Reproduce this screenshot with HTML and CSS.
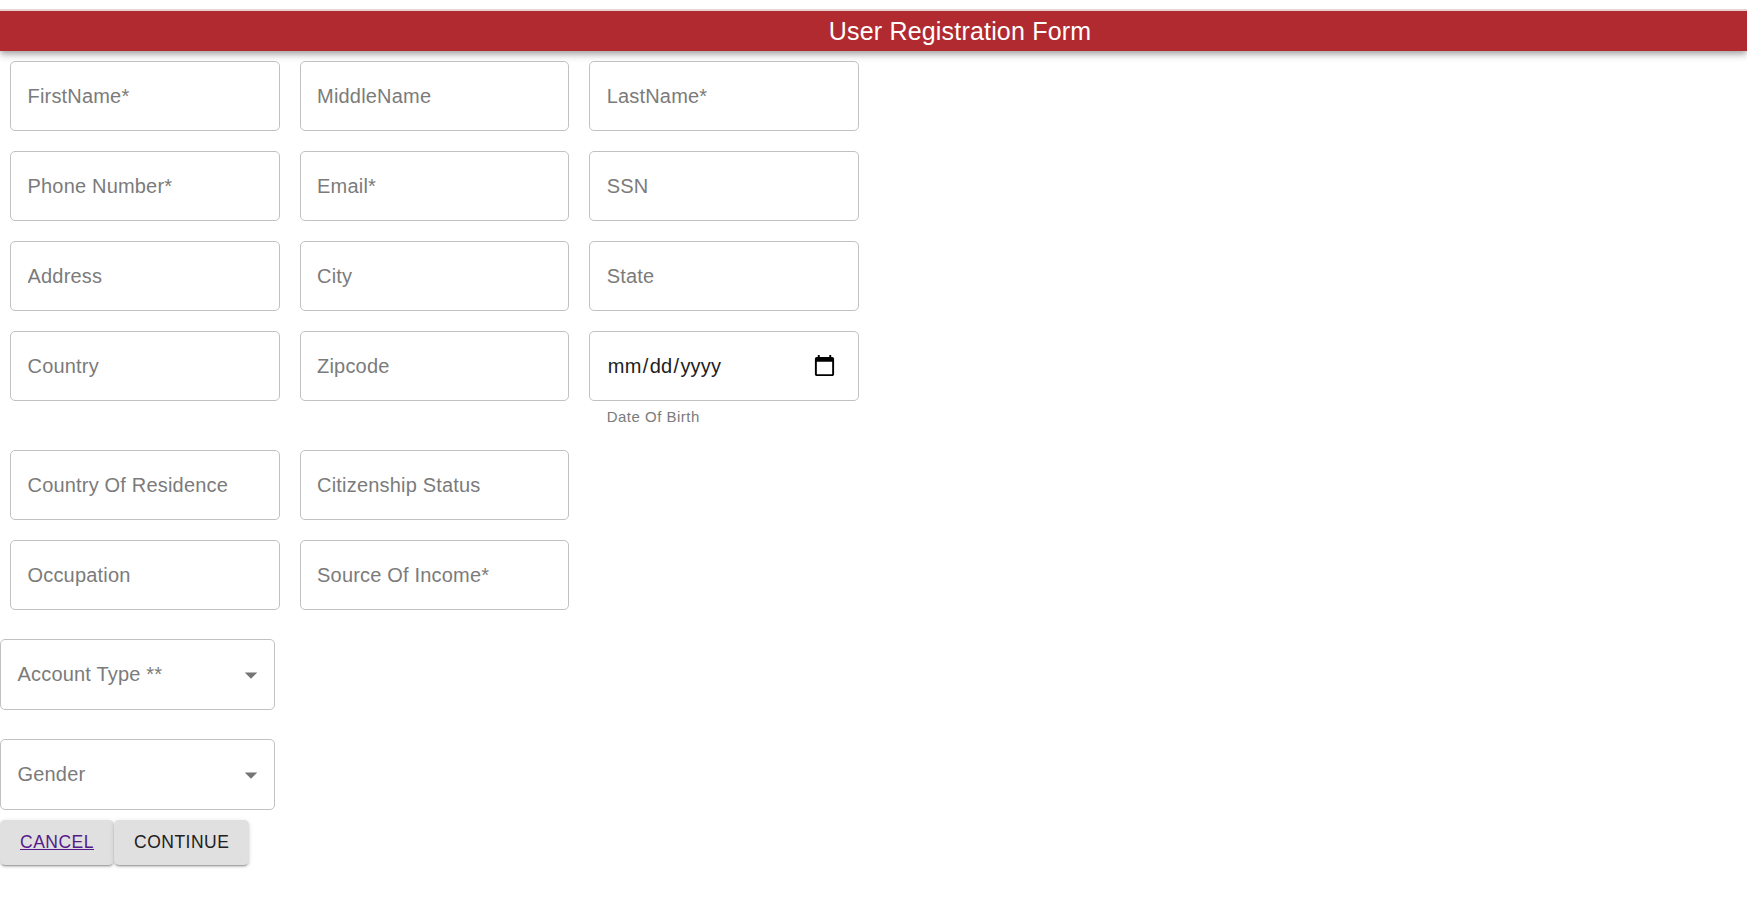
FILE: index.html
```html
<!DOCTYPE html>
<html lang="en">
<head>
<meta charset="utf-8">
<title>User Registration Form</title>
<link rel="stylesheet" href="styles.css">
</head>
<body>
<header class="app-bar"><h1 class="app-title">User Registration Form</h1></header>
<form class="form">
  <div class="grid">
    <input class="field" type="text" placeholder="FirstName*">
    <input class="field" type="text" placeholder="MiddleName">
    <input class="field" type="text" placeholder="LastName*">
    <input class="field" type="text" placeholder="Phone Number*">
    <input class="field" type="text" placeholder="Email*">
    <input class="field" type="text" placeholder="SSN">
    <input class="field" type="text" placeholder="Address">
    <input class="field" type="text" placeholder="City">
    <input class="field" type="text" placeholder="State">
    <input class="field" type="text" placeholder="Country">
    <input class="field" type="text" placeholder="Zipcode">
    <div class="date-control">
      <div class="field date-field">
        <span class="date-value"><span>mm</span>/<span>dd</span>/<span>yyyy</span></span>
        <svg class="calendar" viewBox="0 0 24 24"><path d="M20 3h-1V1h-2v2H7V1H5v2H4c-1.1 0-2 .9-2 2v16c0 1.1.9 2 2 2h16c1.1 0 2-.9 2-2V5c0-1.1-.9-2-2-2zm0 18H4V8h16v13z"/></svg>
      </div>
      <span class="helper">Date Of Birth</span>
    </div>
  </div>
  <div class="grid grid-lower">
    <input class="field" type="text" placeholder="Country Of Residence">
    <input class="field" type="text" placeholder="Citizenship Status">
    <span></span>
    <input class="field" type="text" placeholder="Occupation">
    <input class="field" type="text" placeholder="Source Of Income*">
  </div>
  <div class="selects">
    <div class="select"><span>Account Type **</span><svg class="arrow" viewBox="0 0 24 24"><path d="M7 10l5 5 5-5z"/></svg></div>
    <div class="select"><span>Gender</span><svg class="arrow" viewBox="0 0 24 24"><path d="M7 10l5 5 5-5z"/></svg></div>
  </div>
  <div class="actions">
    <button class="button" type="button"><span class="link">CANCEL</span></button>
    <button class="button" type="button">CONTINUE</button>
  </div>
</form>
</body>
</html>
```
FILE: styles.css
```css
* { box-sizing: border-box; }
body {
  margin: 0;
  min-height: 100vh;
  padding-top: 9px;
  background: #fff;
  font-family: "Liberation Sans", Arial, sans-serif;
}
.app-bar {
  height: 42px;
  padding-left: 173px;
  background: #b02a30;
  border-top: 2px solid #e4d3d1;
  color: #fff;
  box-shadow: 0 2.5px 5px -1px rgba(0,0,0,.2), 0 5px 6px rgba(0,0,0,.14), 0 1px 12px rgba(0,0,0,.12);
  clip-path: inset(0 0 -20px 0);
}
.app-title {
  margin: 0;
  font-size: 25px;
  font-weight: 400;
  line-height: 40px;
  letter-spacing: .0075em;
  text-align: center;
}
.grid {
  position: relative;
  display: grid;
  grid-template-columns: repeat(3, 269.58px);
  gap: 20px;
  padding: 10px 10px 0;
}
.grid-lower { padding-top: 21px; }
.field {
  width: 100%;
  height: 70px;
  padding: 0 16.5px;
  border: 1px solid #c1c1c1;
  border-radius: 5px;
  background: #fff;
  outline: 0;
  font: 20px "Liberation Sans", Arial, sans-serif;
  letter-spacing: .00938em;
}
.field::placeholder { color: #7b7b7b; opacity: 1; }
.date-control { display: flex; flex-direction: column; }
.date-field {
  display: flex;
  align-items: center;
  justify-content: space-between;
  padding-right: 22px;
  color: #212121;
}
.date-value span { padding: 0 1.2px; }
.calendar { width: 23px; height: 23px; margin-bottom: 1px; fill: #000; }
.helper {
  margin: 3px 17.5px 0;
  color: #7b7b7b;
  font-size: 15px;
  line-height: 25px;
  letter-spacing: .03333em;
}
.selects {
  display: flex;
  flex-direction: column;
  gap: 29px;
  width: 275px;
  padding-top: 29px;
}
.select {
  display: flex;
  align-items: center;
  justify-content: space-between;
  height: 71px;
  padding: 0 8px 0 16.5px;
  border: 1px solid #c1c1c1;
  border-radius: 5px;
  color: #7b7b7b;
  font-size: 20px;
  letter-spacing: .00938em;
}
.arrow { width: 30px; height: 30px; fill: #757575; }
.actions { display: flex; padding-top: 10px; }
.button {
  height: 45px;
  padding: 0 20px;
  border: 0;
  border-radius: 5px;
  background: #e0e0e0;
  color: #212121;
  font: 17.5px "Liberation Sans", Arial, sans-serif;
  letter-spacing: .02857em;
  box-shadow: 0 3px 1px -2px rgba(0,0,0,.2), 0 2px 2px rgba(0,0,0,.14), 0 1px 5px rgba(0,0,0,.12);
}
.link { color: #551a8b; text-decoration: underline; }
```
